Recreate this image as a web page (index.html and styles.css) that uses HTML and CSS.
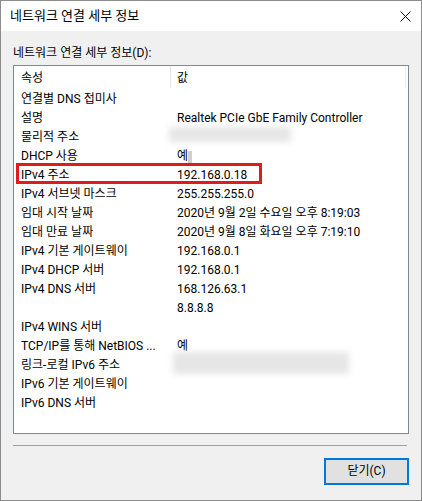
FILE: index.html
```html
<!DOCTYPE html>
<html lang="ko">
<head>
<meta charset="utf-8">
<title>네트워크 연결 세부 정보</title>
<link rel="stylesheet" href="styles.css">
</head>
<body>
<div class="window">
  <div class="titlebar">
    <span class="title">네트워크 연결 세부 정보</span>
    <span class="close">
      <svg width="11" height="11" viewBox="0 0 11 11"><path d="M0.5 0.5 L10.5 10.5 M10.5 0.5 L0.5 10.5" stroke="#111" stroke-width="1" fill="none"/></svg>
    </span>
  </div>
  <div class="content">
    <div class="label">네트워크 연결 세부 정보(D):</div>
    <div class="list">
      <div class="header">
        <div class="hcell first">속성</div>
        <div class="hcell second">값</div>
      </div>
      <div class="rows">
        <div class="row"><div class="name">연결별 DNS 접미사</div><div class="val"></div></div>
        <div class="row"><div class="name">설명</div><div class="val">Realtek PCIe GbE Family Controller</div></div>
        <div class="row"><div class="name">물리적 주소</div><div class="val"><span class="blur mac"></span></div></div>
        <div class="row"><div class="name">DHCP 사용</div><div class="val">예<span class="mark"></span></div></div>
        <div class="row"><div class="name">IPv4 주소</div><div class="val">192.168.0.18</div></div>
        <div class="row"><div class="name">IPv4 서브넷 마스크</div><div class="val">255.255.255.0</div></div>
        <div class="row"><div class="name">임대 시작 날짜</div><div class="val">2020년 9월 2일 수요일 오후 8:19:03</div></div>
        <div class="row"><div class="name">임대 만료 날짜</div><div class="val">2020년 9월 8일 화요일 오후 7:19:10</div></div>
        <div class="row"><div class="name">IPv4 기본 게이트웨이</div><div class="val">192.168.0.1</div></div>
        <div class="row"><div class="name">IPv4 DHCP 서버</div><div class="val">192.168.0.1</div></div>
        <div class="row"><div class="name">IPv4 DNS 서버</div><div class="val">168.126.63.1</div></div>
        <div class="row"><div class="name"></div><div class="val">8.8.8.8</div></div>
        <div class="row"><div class="name">IPv4 WINS 서버</div><div class="val"></div></div>
        <div class="row"><div class="name">TCP/IP를 통해 NetBIOS ...</div><div class="val">예</div></div>
        <div class="row"><div class="name">링크-로컬 IPv6 주소</div><div class="val"><span class="blur ipv6"></span></div></div>
        <div class="row"><div class="name">IPv6 기본 게이트웨이</div><div class="val"></div></div>
        <div class="row"><div class="name">IPv6 DNS 서버</div><div class="val"></div></div>
      </div>
      <div class="highlight"></div>
    </div>
    <div class="separator"></div>
    <div class="actions">
      <button class="btn">닫기(C)</button>
    </div>
  </div>
</div>
</body>
</html>
```
FILE: styles.css
```css
html, body {
  margin: 0;
  padding: 0;
  background: #f0f0f0;
}
body {
  font-family: Roboto, "Noto Sans CJK KR", sans-serif;
  font-size: 12px;
  color: #000;
}
.window {
  width: 422px;
  height: 501px;
  box-sizing: border-box;
  border: 1px solid #8c8c8c;
  background: #f0f0f0;
  display: flex;
  flex-direction: column;
}
.titlebar {
  height: 30px;
  background: #fff;
  display: flex;
  align-items: center;
  justify-content: space-between;
  padding-left: 9px;
}
.title {
  font-size: 13px;
  line-height: 16px;
}
.close {
  width: 32px;
  height: 30px;
  display: flex;
  align-items: center;
  justify-content: center;
}
.close svg { display: block; }
.content {
  padding: 0 12px;
  display: flex;
  flex-direction: column;
}
.label {
  margin-top: 14px;
  line-height: 16px;
  margin-bottom: -1px;
}
.list {
  position: relative;
  margin-top: 5px;
  height: 369px;
  box-sizing: border-box;
  border: 1px solid #828790;
  background: #fff;
}
.header {
  height: 22px;
  display: flex;
}
.hcell {
  height: 22px;
  line-height: 19px;
  padding-top: 3px;
  box-sizing: border-box;
}
.hcell.first {
  width: 157px;
  padding-left: 7px;
  border-right: 1px solid #e5e5e5;
}
.hcell.second {
  width: 235px;
  padding-left: 6px;
  border-right: 1px solid #ececec;
}
.rows {
  display: flex;
  flex-direction: column;
  padding-top: 2px;
}
.row {
  height: 19px;
  display: grid;
  grid-template-columns: 156px 1fr;
  line-height: 19px;
  white-space: nowrap;
}
.name {
  padding-left: 7px;
  overflow: hidden;
}
.val {
  padding-left: 7px;
  display: flex;
  align-items: center;
}
.blur {
  display: inline-block;
  background: #e6e6e6;
  filter: blur(3px);
}
.blur.mac {
  width: 122px;
  height: 15px;
  margin-left: -8px;
  margin-top: -6px;
}
.blur.ipv6 {
  width: 176px;
  height: 22px;
  margin-left: -4px;
  margin-top: -6px;
}
.mark {
  display: inline-block;
  width: 4px;
  height: 12px;
  background: #cfcfcf;
  filter: blur(0.5px);
  margin-left: 0;
}
.highlight {
  position: absolute;
  left: 2px;
  top: 97px;
  width: 246px;
  height: 21px;
  box-sizing: border-box;
  border: 3px solid #e01b1b;
  pointer-events: none;
}
.separator {
  margin-top: 11px;
  height: 1px;
  width: 394px;
  background: #a0a0a0;
}
.actions {
  display: flex;
  justify-content: flex-end;
  margin-top: 12px;
}
.btn {
  width: 85px;
  height: 27px;
  box-sizing: border-box;
  border: 2px solid #0078d7;
  background: #e1e1e1;
  font-family: inherit;
  font-size: 12px;
  color: #000;
  padding: 0;
  line-height: 23px;
}
```
